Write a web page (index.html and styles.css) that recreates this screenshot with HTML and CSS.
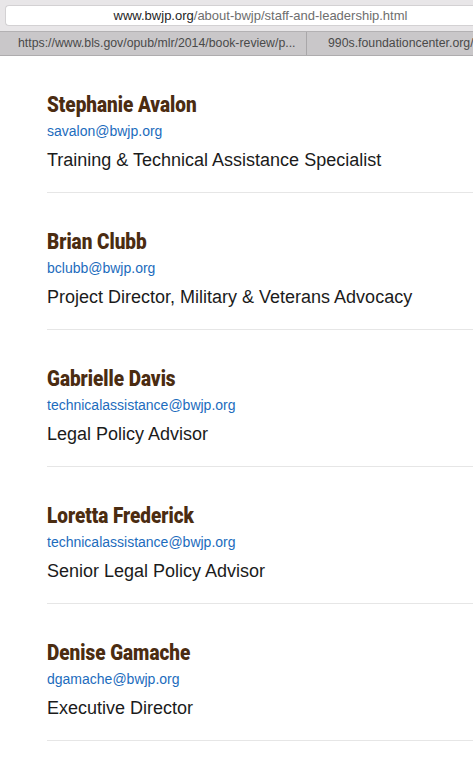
FILE: index.html
```html
<!DOCTYPE html>
<html>
<head>
<meta charset="utf-8">
<link rel="stylesheet" href="styles.css">
</head>
<body>
<div class="chrome">
  <div class="toolbar">
    <div class="urlfield"><span class="host">www.bwjp.org</span><span class="path">/about-bwjp/staff-and-leadership.html</span></div>
  </div>
  <div class="tabs">
    <div class="tab tab-first">https://www.bls.gov/opub/mlr/2014/book-review/p...</div>
    <div class="tab tab-second">990s.foundationcenter.org/9</div>
  </div>
</div>
<main class="staff">
  <div class="person">
    <h2 class="name">Stephanie Avalon</h2>
    <a class="email" href="#">savalon@bwjp.org</a>
    <p class="role">Training &amp; Technical Assistance Specialist</p>
  </div>
  <div class="person">
    <h2 class="name">Brian Clubb</h2>
    <a class="email" href="#">bclubb@bwjp.org</a>
    <p class="role">Project Director, Military &amp; Veterans Advocacy</p>
  </div>
  <div class="person">
    <h2 class="name">Gabrielle Davis</h2>
    <a class="email" href="#">technicalassistance@bwjp.org</a>
    <p class="role">Legal Policy Advisor</p>
  </div>
  <div class="person">
    <h2 class="name">Loretta Frederick</h2>
    <a class="email" href="#">technicalassistance@bwjp.org</a>
    <p class="role">Senior Legal Policy Advisor</p>
  </div>
  <div class="person">
    <h2 class="name">Denise Gamache</h2>
    <a class="email" href="#">dgamache@bwjp.org</a>
    <p class="role">Executive Director</p>
  </div>
</main>
</body>
</html>
```

FILE: styles.css
```css
* { box-sizing: border-box; }
html, body { margin: 0; padding: 0; }
body {
  width: 473px;
  height: 760px;
  overflow: hidden;
  background: #ffffff;
  font-family: "Liberation Sans", Arial, sans-serif;
}
.chrome {
  background: #e8e6e8;
}
.toolbar {
  height: 31px;
  padding: 5px 0 0 5px;
}
.urlfield {
  height: 21px;
  background: #ffffff;
  border: 1px solid #d3d1d3;
  border-right: none;
  border-radius: 4px 0 0 4px;
  padding-left: 42px;
  font-size: 13px;
  line-height: 19px;
  text-align: center;
  white-space: nowrap;
}
.host { color: #1e1e1e; }
.path { color: #6e6e6e; }
.tabs {
  display: flex;
  height: 25px;
  background: #c9c7c9;
  border-top: 1px solid #b3b1b3;
  border-bottom: 1px solid #aeacae;
  overflow: hidden;
  white-space: nowrap;
}
.tab {
  font-size: 12.3px;
  line-height: 23px;
  color: #4a4a4a;
  overflow: hidden;
}
.tab-first {
  width: 307px;
  flex: none;
  padding-left: 18px;
  border-right: 1px solid #a9a7a9;
}
.tab-second {
  flex: 1;
  min-width: 0;
  padding-left: 21px;
}
.staff {
  padding-left: 47px;
}
.person {
  border-bottom: 1px solid #e6e6e6;
  padding-top: 36px;
  padding-bottom: 20px;
}
.name {
  margin: 0;
  display: inline-block;
  transform: scaleX(0.86);
  transform-origin: left center;
  font-family: "Roboto", "Liberation Sans", sans-serif;
  font-weight: 900;
  font-size: 22px;
  line-height: 26px;
  color: #4b2c11;
  white-space: nowrap;
}
.email {
  display: block;
  margin-top: 4px;
  font-size: 14px;
  line-height: 18px;
  color: #1c6cbd;
  text-decoration: none;
}
.role {
  margin: 8px 0 0;
  font-size: 18px;
  line-height: 24px;
  color: #1b1b1b;
}
```
